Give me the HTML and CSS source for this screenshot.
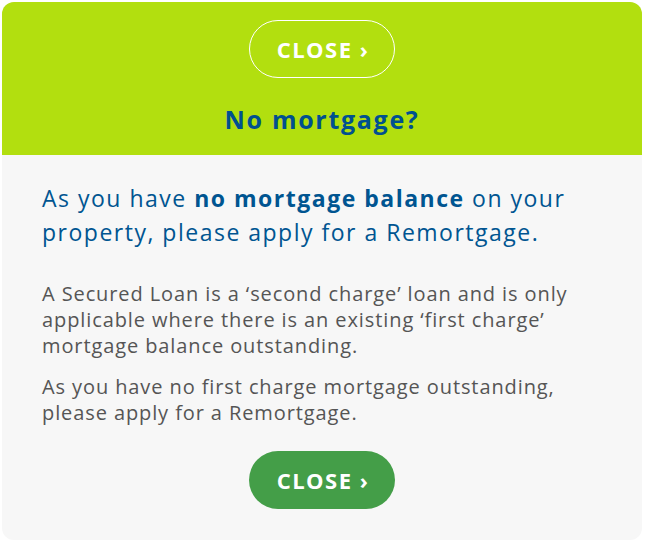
FILE: index.html
```html
<!DOCTYPE html>
<html>
<head>
<meta charset="utf-8">
<link rel="stylesheet" href="styles.css">
</head>
<body>
<div class="card">
  <div class="head">
    <button class="btn btn-outline">CLOSE ›</button>
    <h2 class="title">No mortgage?</h2>
  </div>
  <div class="content">
    <p class="lead">As you have <strong>no mortgage balance</strong> on your property, please apply for a Remortgage.</p>
    <p class="text">A Secured Loan is a ‘second charge’ loan and is only applicable where there is an existing ‘first charge’ mortgage balance outstanding.</p>
    <p class="text">As you have no first charge mortgage outstanding, please apply for a Remortgage.</p>
    <div class="actions">
      <button class="btn btn-solid">CLOSE ›</button>
    </div>
  </div>
</div>
</body>
</html>
```
FILE: styles.css
```css
* { box-sizing: border-box; }
html, body { margin: 0; padding: 0; background: #ffffff; }
body { padding: 2px 3px 3px 2px; font-family: "Open Sans", "Noto Sans", sans-serif; }
.card {
  width: 640px;
  height: 538px;
  border-radius: 12px;
  overflow: hidden;
  background: #f7f7f7;
  display: flex;
  flex-direction: column;
}
.head {
  background: #b2df0f;
  height: 153px;
  display: flex;
  flex-direction: column;
  align-items: center;
  padding-top: 18px;
}
.btn {
  font-family: "Open Sans", "Noto Sans", sans-serif;
  font-weight: 700;
  font-size: 22px;
  letter-spacing: 1.5px;
  text-indent: 2px;
  color: #ffffff;
  width: 146px;
  height: 58px;
  border-radius: 29px;
  cursor: pointer;
  padding: 0;
}
.btn-outline {
  background: transparent;
  border: 1.5px solid #ffffff;
}
.btn-solid {
  background: #449e48;
  border: none;
}
.title {
  margin: 25px 0 0;
  font-size: 25px;
  font-weight: 700;
  letter-spacing: 1.7px;
  color: #00508f;
  line-height: 32px;
}
.content {
  padding: 26px 40px 0;
}
.lead {
  margin: 0 0 32px;
  font-size: 23px;
  letter-spacing: 1.5px;
  line-height: 34px;
  color: #005591;
}
.lead strong { font-weight: 700; }
.text {
  margin: 0 0 15px;
  font-size: 20px;
  letter-spacing: 0.9px;
  line-height: 26px;
  color: #555555;
}
.actions {
  display: flex;
  justify-content: center;
  padding-top: 10px;
}
```
